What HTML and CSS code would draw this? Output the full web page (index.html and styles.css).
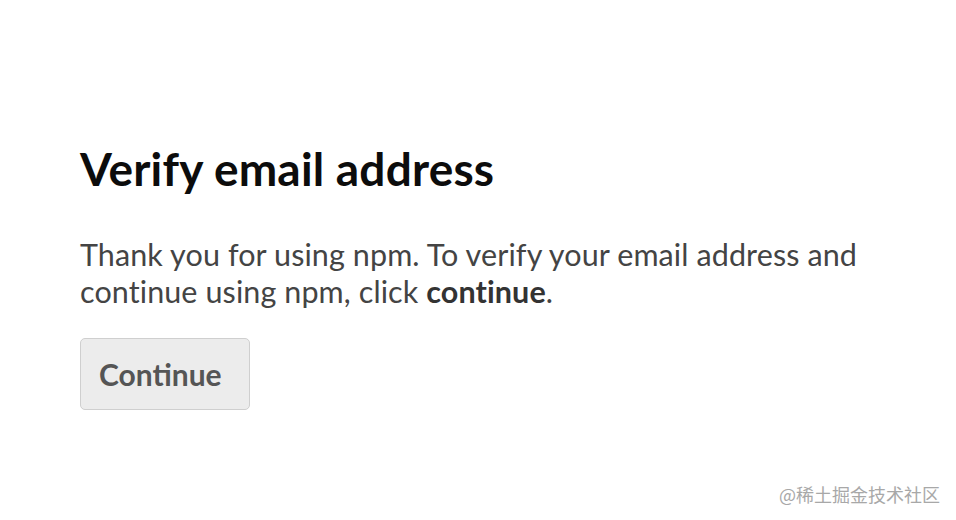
FILE: index.html
```html
<!DOCTYPE html>
<html lang="en">
<head>
<meta charset="utf-8">
<link rel="stylesheet" href="styles.css">
</head>
<body>
<main class="page">
  <h1 class="title">Verify email address</h1>
  <p class="text">Thank you for using npm. To verify your email address and continue using npm, click <strong>continue</strong>.</p>
  <button class="btn" type="button">Continue</button>
</main>
<div class="watermark">@稀土掘金技术社区</div>
</body>
</html>
```
FILE: styles.css
```css
html, body {
  margin: 0;
  padding: 0;
  background: #ffffff;
}
body {
  width: 956px;
  height: 520px;
  position: relative;
  overflow: hidden;
  font-family: "Lato", "Noto Sans", sans-serif;
}
.page {
  padding: 141px 0 0 80px;
  display: flex;
  flex-direction: column;
  align-items: flex-start;
}
.title {
  margin: 0;
  font-size: 46px;
  line-height: 56px;
  font-weight: 700;
  color: #0c0c0c;
  letter-spacing: 0.2px;
}
.text {
  margin: 39px 0 0 0;
  width: 820px;
  font-size: 30.5px;
  line-height: 37px;
  letter-spacing: 0.1px;
  color: #444;
}
.text strong {
  color: #333;
}
.btn {
  margin-top: 28px;
  width: 170px;
  height: 72px;
  background: #ececec;
  border: 1px solid #cfcfcf;
  border-radius: 5px;
  font-family: inherit;
  font-size: 30px;
  font-weight: 700;
  color: #555;
  text-align: left;
  padding: 0 0 0 18px;
}
.watermark {
  position: absolute;
  right: 16px;
  bottom: 13px;
  font-family: "Noto Sans CJK SC", sans-serif;
  font-size: 18px;
  color: #a8a8a8;
}
```
